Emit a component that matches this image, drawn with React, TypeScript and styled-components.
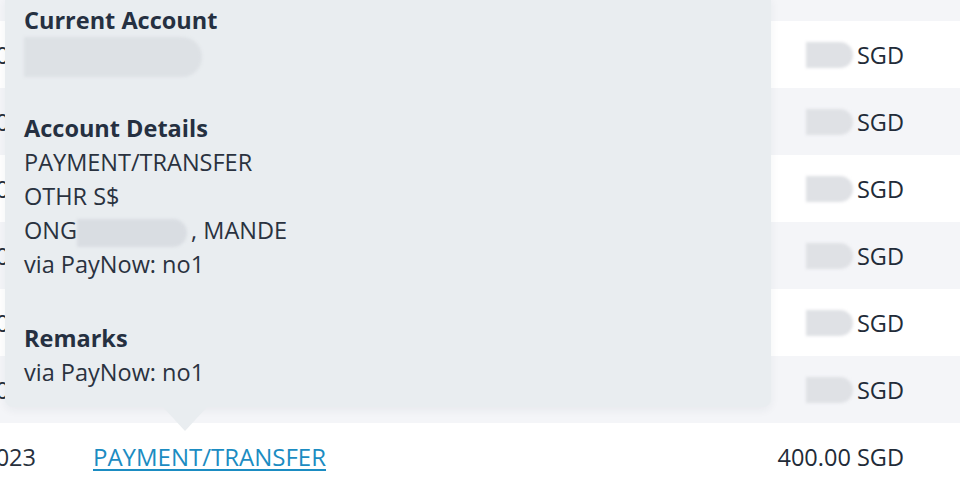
import styled, { createGlobalStyle } from "styled-components";

const GlobalStyle = createGlobalStyle`
  html, body {
    margin: 0;
    padding: 0;
    background: #ffffff;
    overflow: hidden;
  }
  body {
    font-family: "Open Sans", "Noto Sans", sans-serif;
    color: #27303d;
  }
`;

type Txn = { date: string; desc: string; amount?: string };

const rows: Txn[] = [
  { date: "01 Dec 2023", desc: "PAYMENT/TRANSFER" },
  { date: "01 Dec 2023", desc: "PAYMENT/TRANSFER" },
  { date: "30 Nov 2023", desc: "PAYMENT/TRANSFER" },
  { date: "30 Nov 2023", desc: "PAYMENT/TRANSFER" },
  { date: "30 Nov 2023", desc: "PAYMENT/TRANSFER" },
  { date: "30 Nov 2023", desc: "PAYMENT/TRANSFER" },
  { date: "30 Nov 2023", desc: "PAYMENT/TRANSFER", amount: "400.00" },
];

export default function App() {
  return (
    <Page>
      <GlobalStyle />
      <Table>
        <TopStrip />
        {rows.map((r, i) => (
          <Row key={i} $striped={i % 2 === 1}>
            <DateCell>{r.date}</DateCell>
            <DescCell>
              <DescLink href="#">{r.desc}</DescLink>
            </DescCell>
            <AmountCell>
              {r.amount ? `${r.amount} ` : <Smudge $w={47} $h={26} />}
              SGD
            </AmountCell>
          </Row>
        ))}
      </Table>

      <Tooltip role="tooltip">
        <Section>
          <Heading>Current Account</Heading>
          <Line>
            <Smudge $w={178} $h={40} $tone="#dde1e5" />
          </Line>
        </Section>
        <Section>
          <Heading>Account Details</Heading>
          <Line>PAYMENT/TRANSFER</Line>
          <Line>OTHR S$</Line>
          <Line>
            ONG
            <Smudge $w={110} $h={28} $tone="#d9dde2" />, MANDE
          </Line>
          <Line>via PayNow: no1</Line>
        </Section>
        <Section>
          <Heading>Remarks</Heading>
          <Line>via PayNow: no1</Line>
        </Section>
        <Arrow />
      </Tooltip>
    </Page>
  );
}

const Page = styled.div`
  position: relative;
  width: 960px;
  height: 483px;
  overflow: hidden;
`;

const Table = styled.div`
  display: flex;
  flex-direction: column;
`;

const TopStrip = styled.div`
  height: 21px;
  background: #f4f5f8;
`;

const Row = styled.div<{ $striped: boolean }>`
  display: grid;
  grid-template-columns: 36px 1fr auto;
  column-gap: 57px;
  align-items: center;
  height: 67px;
  padding-right: 56px;
  background: ${(p) => (p.$striped ? "#f4f5f8" : "#ffffff")};
  font-size: 23.5px;
`;

const DateCell = styled.div`
  display: flex;
  justify-content: flex-end;
  white-space: nowrap;
  color: #27303d;
`;

const DescCell = styled.div`
  white-space: nowrap;
`;

const DescLink = styled.a`
  color: #1b8cc2;
  font-size: 24px;
  text-decoration: underline;
  text-underline-offset: 3px;
  text-decoration-thickness: 2px;
`;

const AmountCell = styled.div`
  display: flex;
  align-items: center;
  white-space: pre;
  color: #222b38;
`;

const Smudge = styled.span<{ $w: number; $h: number; $tone?: string }>`
  display: inline-block;
  width: ${(p) => p.$w}px;
  height: ${(p) => p.$h}px;
  margin-right: 4px;
  border-radius: 0 ${(p) => p.$h / 2}px ${(p) => p.$h / 2}px 0;
  background: ${(p) => p.$tone ?? "#dfe1e5"};
  filter: blur(1.5px);
  vertical-align: middle;
`;

const Tooltip = styled.div`
  position: absolute;
  left: 5px;
  top: -3px;
  width: 728px;
  padding: 6px 19px 18px;
  background: #e9edf0;
  border-radius: 0 0 8px 8px;
  box-shadow: 0 3px 10px rgba(40, 50, 70, 0.06);
  display: flex;
  flex-direction: column;
  gap: 40px;
  font-size: 23.5px;
  line-height: 34px;
`;

const Section = styled.div`
  display: flex;
  flex-direction: column;
`;

const Heading = styled.div`
  font-weight: 700;
  color: #253041;
`;

const Line = styled.div`
  height: 34px;
  color: #2a323f;
  white-space: nowrap;
`;

const Arrow = styled.span`
  position: absolute;
  left: 158px;
  bottom: -24px;
  width: 0;
  height: 0;
  border-left: 22px solid transparent;
  border-right: 22px solid transparent;
  border-top: 24px solid #e9edf0;
`;
